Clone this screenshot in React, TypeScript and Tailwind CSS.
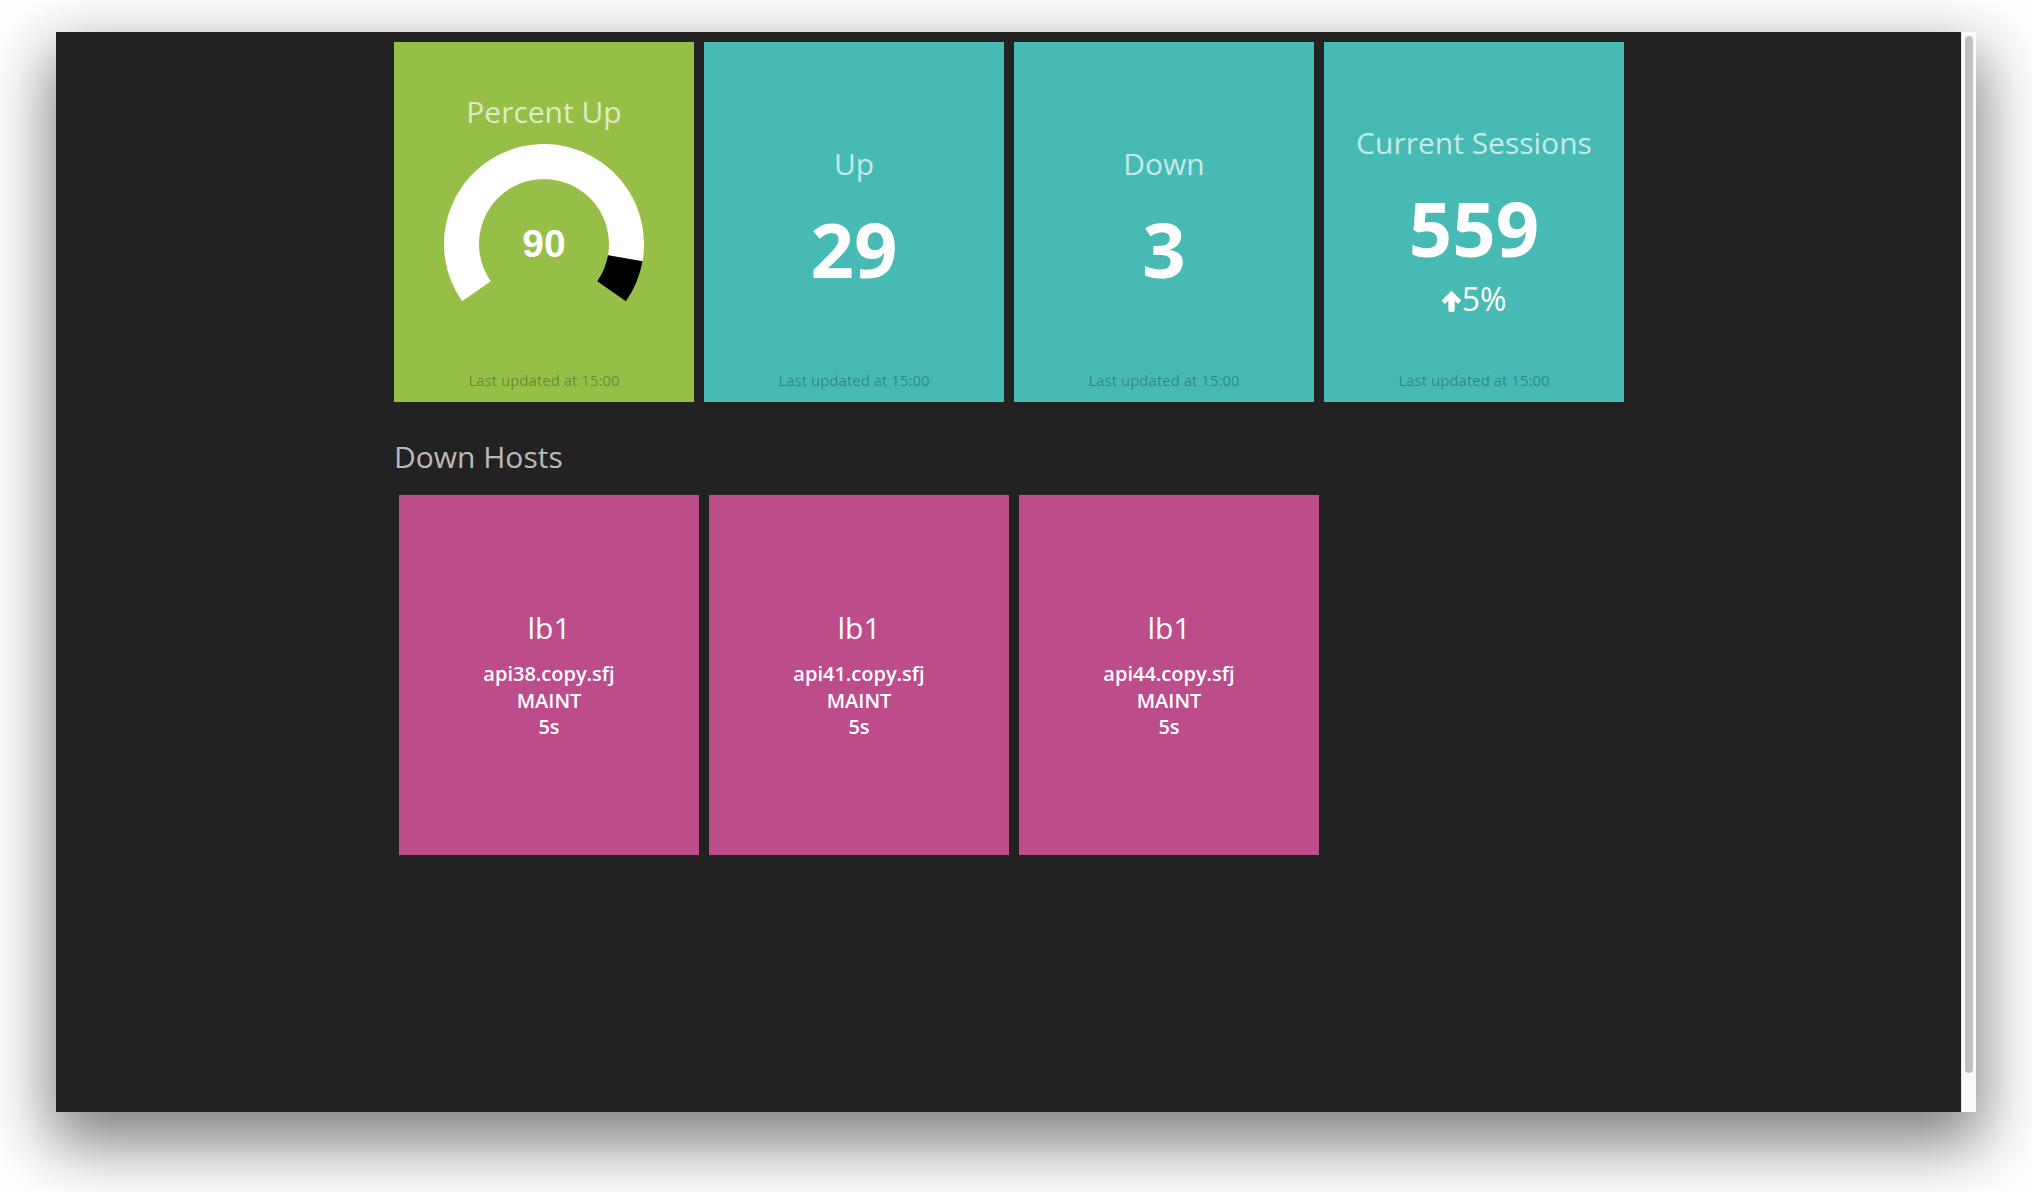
import type { ReactNode } from 'react'

const hosts = [
  { lb: 'lb1', host: 'api38.copy.sfj', status: 'MAINT', since: '5s' },
  { lb: 'lb1', host: 'api41.copy.sfj', status: 'MAINT', since: '5s' },
  { lb: 'lb1', host: 'api44.copy.sfj', status: 'MAINT', since: '5s' },
]

// point on a circle, angle measured clockwise from 12 o'clock (like jquery-knob)
function polar(cx: number, cy: number, r: number, deg: number) {
  const rad = (deg * Math.PI) / 180
  return { x: cx + r * Math.sin(rad), y: cy - r * Math.cos(rad) }
}

function arc(cx: number, cy: number, r: number, from: number, to: number) {
  const a = polar(cx, cy, r, from)
  const b = polar(cx, cy, r, to)
  const large = to - from > 180 ? 1 : 0
  return `M ${a.x} ${a.y} A ${r} ${r} 0 ${large} 1 ${b.x} ${b.y}`
}

function Knob({ value }: { value: number }) {
  const start = -125
  const span = 250
  const split = start + (span * value) / 100
  return (
    <div className="relative mx-auto h-[200px] w-[200px]">
      <svg width="200" height="200" viewBox="0 0 200 200">
        <path d={arc(100, 100, 82.5, start, split)} fill="none" stroke="#ffffff" strokeWidth="35" />
        <path d={arc(100, 100, 82.5, split, start + span)} fill="none" stroke="#000000" strokeWidth="35" />
      </svg>
      <div className="absolute inset-0 flex items-center justify-center font-['Liberation_Sans',Arial,sans-serif] text-[39px] font-bold text-white">
        {value}
      </div>
    </div>
  )
}

function Updated() {
  return (
    <p className="mt-auto pb-[13px] text-center text-[15px] leading-[18px] text-black/30">Last updated at 15:00</p>
  )
}

function Tile({ color, children }: { color: string; children: ReactNode }) {
  return <div className={`flex h-[360px] w-[300px] flex-col items-center ${color}`}>{children}</div>
}

function ArrowUp() {
  return (
    <svg width="19" height="22" viewBox="0 0 18 21" className="mr-[1px] mt-[4px]">
      <path
        d="M9 0.6 L17.4 9 a1.6 1.6 0 0 1 0 2.3 l-1 1 a1.6 1.6 0 0 1 -2.3 0 L12 10.2 V19.4 a1.6 1.6 0 0 1 -1.6 1.6 h-2.8 a1.6 1.6 0 0 1 -1.6 -1.6 V10.2 L3.9 12.3 a1.6 1.6 0 0 1 -2.3 0 l-1 -1 a1.6 1.6 0 0 1 0 -2.3 Z"
        fill="#ffffff"
      />
    </svg>
  )
}

export default function App() {
  return (
    <div className="h-[1192px] w-full overflow-hidden bg-white pl-[56px] pt-[32px] font-['Open_Sans',sans-serif]">
      <div className="flex h-[1080px] w-[1920px] shadow-[0_26px_60px_6px_rgba(0,0,0,0.5)]">
        <div className="flex-1 bg-[#222222] pl-[338px] pt-[10px]">
          <div className="flex gap-[10px]">
            <Tile color="bg-[#96bf48]">
              <h2 className="mt-[52px] text-[30px] leading-[36px] text-white/70">Percent Up</h2>
              <div className="mt-[14px]">
                <Knob value={90} />
              </div>
              <Updated />
            </Tile>

            <Tile color="bg-[#47bbb3]">
              <h2 className="mt-[104px] text-[30px] leading-[36px] text-white/70">Up</h2>
              <p className="mt-[29px] text-[76px] font-bold leading-[76px] text-white">29</p>
              <Updated />
            </Tile>

            <Tile color="bg-[#47bbb3]">
              <h2 className="mt-[104px] text-[30px] leading-[36px] text-white/70">Down</h2>
              <p className="mt-[29px] text-[76px] font-bold leading-[76px] text-white">3</p>
              <Updated />
            </Tile>

            <Tile color="bg-[#47bbb3]">
              <h2 className="mt-[83px] text-[30px] leading-[36px] text-white/70">Current Sessions</h2>
              <p className="mt-[29px] text-[76px] font-bold leading-[76px] text-white">559</p>
              <p className="mt-[15px] flex items-center text-[32px] font-medium leading-[36px] text-white">
                <ArrowUp />
                5%
              </p>
              <Updated />
            </Tile>
          </div>

          <h3 className="mt-[37px] text-[30px] leading-[36px] text-white/70">Down Hosts</h3>

          <div className="mt-[20px] flex gap-[10px] pl-[5px]">
            {hosts.map((h) => (
              <div key={h.host} className="flex h-[360px] w-[300px] flex-col items-center bg-[#bd4c8b] text-white">
                <h4 className="mt-[115px] text-[30px] leading-[36px]">{h.lb}</h4>
                <div className="mt-[15px] text-center text-[20px] font-semibold leading-[26.5px]">
                  <p>{h.host}</p>
                  <p>{h.status}</p>
                  <p>{h.since}</p>
                </div>
              </div>
            ))}
          </div>
        </div>

        <div className="w-[15px] border-l border-[#e6e6e6] bg-[#fafafa] pl-[3px] pt-[4px]">
          <div className="h-[1037px] w-[8px] rounded-full bg-[#c1c1c1]" />
        </div>
      </div>
    </div>
  )
}
